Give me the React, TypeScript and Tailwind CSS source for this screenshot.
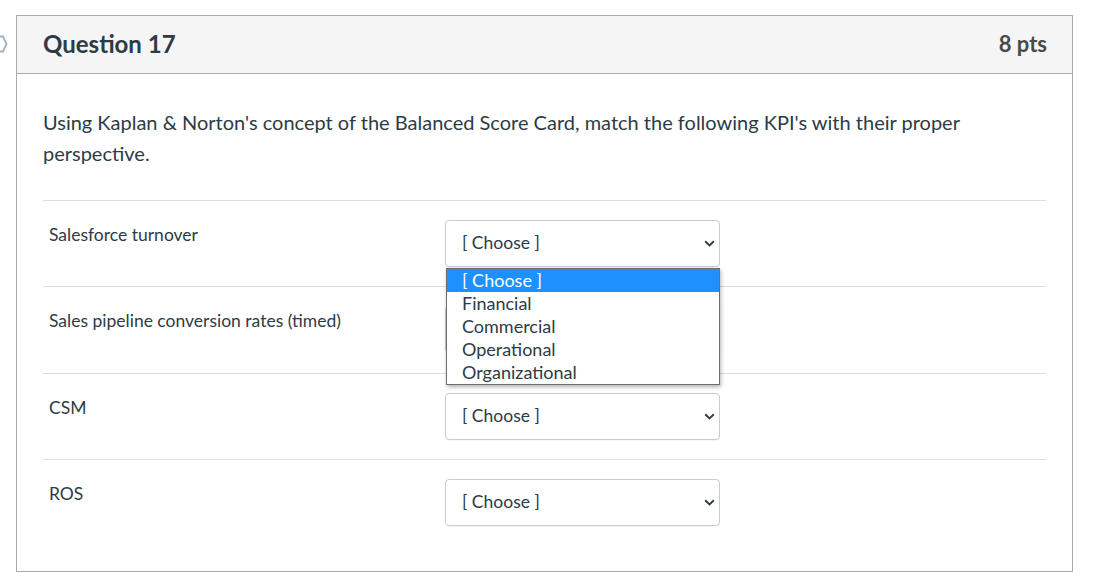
const OPTIONS = ["[ Choose ]", "Financial", "Commercial", "Operational", "Organizational"];

const ANSWERS = [
  { label: "Salesforce turnover", open: true },
  { label: "Sales pipeline conversion rates (timed)", open: false },
  { label: "CSM", open: false },
  { label: "ROS", open: false },
];

function Chevron() {
  return (
    <svg width="11" height="7" viewBox="0 0 11 7" className="shrink-0">
      <path d="M1.2 1.2 L5.5 5.4 L9.8 1.2" fill="none" stroke="#2d3b45" strokeWidth="1.9" />
    </svg>
  );
}

function FakeSelect({ open }: { open: boolean }) {
  return (
    <div className="relative w-[275px]">
      <div className="flex h-[47px] items-center justify-between rounded-[4px] border border-[#c7cdd1] bg-white pl-[16px] pr-[4px] text-[17.5px] text-[#2d3b45] shadow-[0_1px_1px_rgba(0,0,0,0.04)]">
        <span>[ Choose ]</span>
        <Chevron />
      </div>
      {open && (
        <div className="absolute left-[1px] top-[48px] z-10 w-[274px] border border-[#6e6e6e] bg-white shadow-[1px_2px_4px_rgba(0,0,0,0.3)]">
          {OPTIONS.map((opt, i) => (
            <div
              key={opt}
              className={
                i === 0
                  ? "h-[23px] bg-[#1e90ff] pl-[15px] text-[18px] leading-[22px] text-white"
                  : "h-[23px] pl-[15px] text-[18px] leading-[22px] text-[#2d3b45]"
              }
            >
              {opt}
            </div>
          ))}
        </div>
      )}
    </div>
  );
}

export default function App() {
  return (
    <div className="relative min-h-[582px] bg-white font-['Lato','Noto_Sans',sans-serif] text-[#2d3b45]">
      {/* flag icon peeking at the left edge */}
      <svg width="8" height="18" viewBox="0 0 8 18" className="absolute left-0 top-[35px]">
        <path d="M0 1.5 L3 1.5 L6.5 9 L3 16.5 L0 16.5" fill="none" stroke="#9fb3c6" strokeWidth="1.8" />
      </svg>

      <div className="ml-4 w-[1057px] pt-[15px]">
        <div className="border border-[#aaaaaa]">
          <div className="flex h-[58px] items-center justify-between border-b border-[#aaaaaa] bg-[#f5f5f5] pb-[2px] pl-[26px] pr-[25px]">
            <h2 className="text-[24px] font-bold leading-none text-[#2d3b45]">Question 17</h2>
            <span className="text-[22px] font-bold leading-none text-[#4a4a4a]">8 pts</span>
          </div>

          <div className="px-[26px] pb-[26px] pt-[33px]">
            <p className="text-[20px] leading-[31px]">
              Using Kaplan &amp; Norton's concept of the Balanced Score Card, match the following KPI's with their proper
              <br />
              perspective.
            </p>

            <div className="mt-[31px]">
              {ANSWERS.map((a, i) => (
                <div
                  key={a.label}
                  className={
                    i === 1
                      ? "flex items-start border-t border-[#dddddd] pb-[20px] pt-[19px]"
                      : "flex items-start border-t border-[#dddddd] py-[19px]"
                  }
                >
                  <div className="w-[402px] pl-[6px] pt-[5px] text-[17.5px] leading-[20px]">{a.label}</div>
                  <FakeSelect open={a.open} />
                </div>
              ))}
            </div>
          </div>
        </div>
      </div>
    </div>
  );
}
